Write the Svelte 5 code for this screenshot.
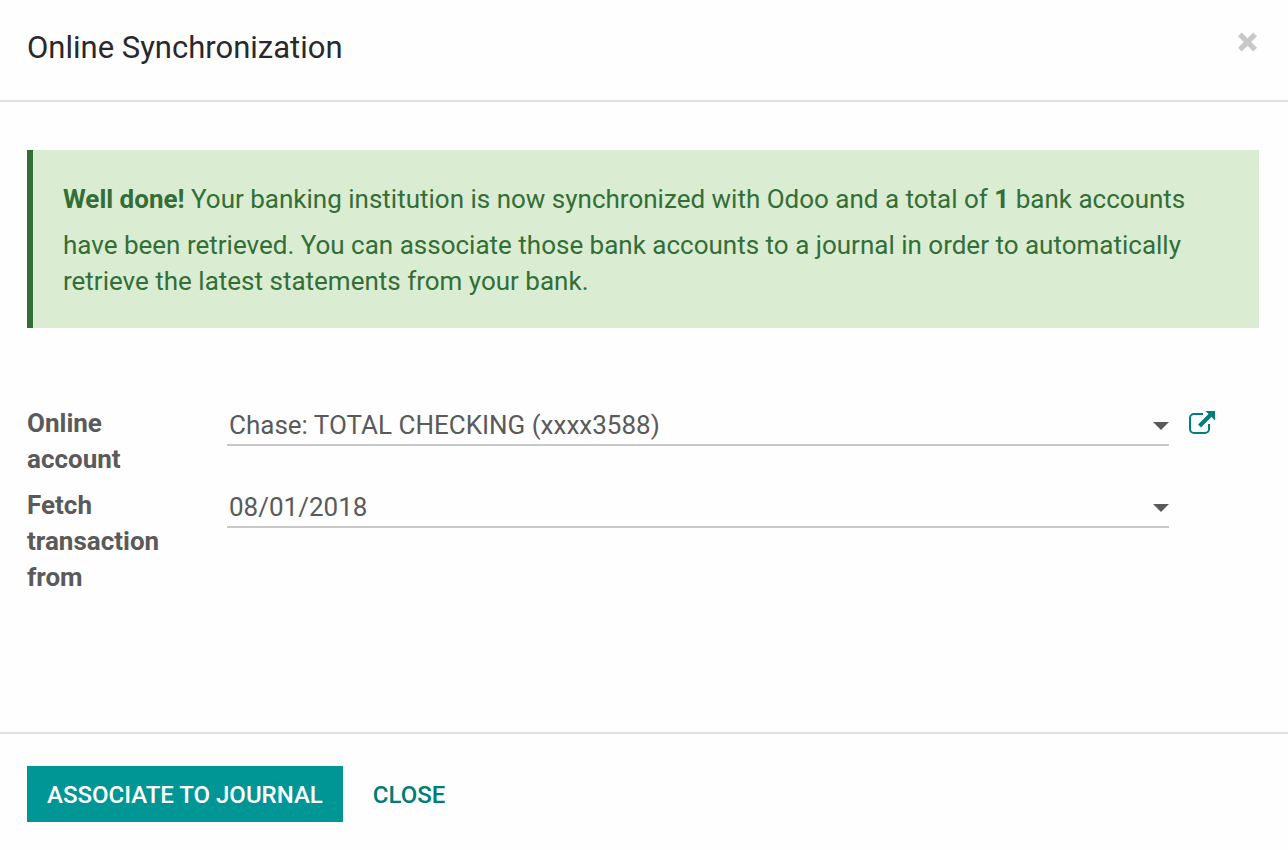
<script lang="ts">
  let total = $state(1);
  let account = $state("Chase: TOTAL CHECKING (xxxx3588)");
  let fetchFrom = $state("08/01/2018");
</script>

{#snippet caret()}
  <svg class="caret" viewBox="0 0 16 10" aria-hidden="true"><path d="M0 2h16l-8 8z" /></svg>
{/snippet}

<div class="modal" role="dialog" aria-labelledby="modal-title">
  <header>
    <h4 id="modal-title">Online Synchronization</h4>
    <button class="btn-dismiss" type="button" aria-label="Dismiss">
      <svg viewBox="0 0 20 20" aria-hidden="true">
        <path d="M3.7 .5L9.500 6.300 15.300 .5 19 4.200 13.200 10 19 15.800 15.300 19.500 9.500 13.700 3.700 19.500 0 15.800 5.800 10 0 4.200z" />
      </svg>
    </button>
  </header>

  <main>
    <div class="alert" role="status">
      <b>Well done!</b> Your banking institution is now synchronized with Odoo and a total of
      <b class="field">{total}</b> bank accounts have been retrieved. You can associate those bank
      accounts to a journal in order to automatically retrieve the latest statements from your bank.
    </div>

    <form id="sync-form" onsubmit={(e) => e.preventDefault()}>
      <div class="row">
        <label for="online-account">Online account</label>
        <div class="control">
          <input id="online-account" type="text" autocomplete="off" bind:value={account} />
          {@render caret()}
        </div>
        <button class="btn-external" type="button" aria-label="External link">
          <svg viewBox="0 0 28 24" aria-hidden="true">
            <path class="box" d="M14 3H5a4 4 0 0 0-4 4v11a4 4 0 0 0 4 4h11a4 4 0 0 0 4-4v-5" />
            <path class="shaft" d="M10.5 15L21.5 4" />
            <path class="head" d="M16.5 0H26v9.5z" />
          </svg>
        </button>
      </div>
      <div class="row">
        <label for="fetch-from">Fetch transaction from</label>
        <div class="control">
          <input id="fetch-from" type="text" autocomplete="off" bind:value={fetchFrom} />
          {@render caret()}
        </div>
      </div>
    </form>
  </main>

  <footer>
    <button class="btn btn-primary" type="submit" form="sync-form">Associate to Journal</button>
    <button class="btn btn-link" type="button">Close</button>
  </footer>
</div>

<style>
  :global(body) { background: #fefefe; }
  .modal {
    display: flex; flex-direction: column;
    box-sizing: border-box; min-height: 100vh;
    font-family: Roboto, sans-serif; font-size: 26px; line-height: 36px;
    color: #5a5a5a;
  }
  button, input { font: inherit; color: inherit; background: none; border: 0; margin: 0; padding: 0; }
  button { cursor: pointer; }
  svg { display: block; }

  header {
    display: flex; justify-content: space-between; align-items: flex-start;
    padding: 30px 30px 34px 27px;
    border-bottom: 2px solid #e0e0e0;
  }
  h4 { margin: 0; font-size: 31px; font-weight: 400; color: #28282d; }
  .btn-dismiss { padding: 2px 0; }
  .btn-dismiss svg {
    width: 20px; height: 20px;
    fill: #c8c8c8;
  }

  main { flex: 1; padding: 48px 29px 48px 27px; }
  .alert {
    padding: 31px 30px 29px;
    border-left: 6px solid #336e37;
    background: #daecd2; color: #336e37;
  }
  .alert .field { display: inline-block; margin-bottom: 10px; }

  form { margin-top: 77px; }
  .row {
    display: grid; align-items: start;
    grid-template-columns: 140px 1fr 28px; column-gap: 20px;
    padding-right: 42px; margin-bottom: 10px;
  }
  label { font-weight: 700; }
  .control {
    display: flex; align-items: center;
    margin-left: 40px; padding: 2px 0 1px 2px;
    border-bottom: 2px solid #c8c8c8;
  }
  input { flex: 1; min-width: 0; height: 36px; }
  .caret { width: 16px; height: 10px; fill: #5a5a5a; }
  .btn-external { padding-top: 6px; color: #00807b; }
  .btn-external svg { width: 28px; height: 24px; fill: none; stroke: currentColor; }
  .box { stroke-width: 2; }
  .shaft { stroke-width: 4; }
  .head { fill: currentColor; stroke: none; }

  footer {
    display: flex; gap: 10px;
    padding: 32px 27px 28px;
    border-top: 2px solid #e0e0e0;
  }
  .btn { padding: 11px 20px 9px; font-size: 24px; font-weight: 500; text-transform: uppercase; }
  .btn-primary { background: #009696; color: #fff; }
  .btn-link { color: #007d78; }
  button:focus-visible { outline: 2px solid #00807b; outline-offset: 2px; }
  input:focus { outline: none; }
  .control:focus-within { border-color: #009696; }
</style>
